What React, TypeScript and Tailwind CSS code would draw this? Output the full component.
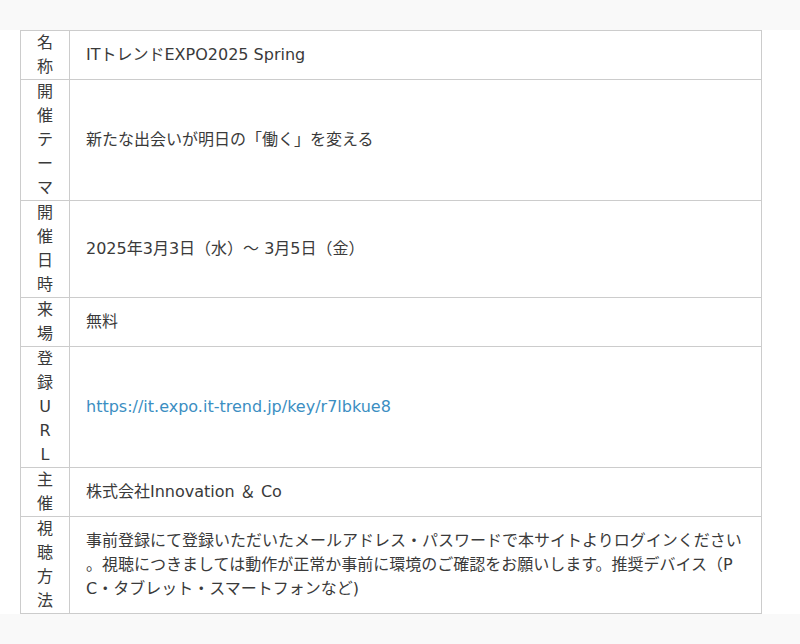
import React from 'react';

type Row = { label: string; value: React.ReactNode };

const rows: Row[] = [
  { label: '名称', value: 'ITトレンドEXPO2025 Spring' },
  { label: '開催テーマ', value: '新たな出会いが明日の「働く」を変える' },
  { label: '開催日時', value: '2025年3月3日（水）～ 3月5日（金）' },
  { label: '来場', value: '無料' },
  {
    label: '登録URL',
    value: (
      <a href="#" className="text-[#3b8ec2]">
        https://it.expo.it-trend.jp/key/r7lbkue8
      </a>
    ),
  },
  { label: '主催', value: '株式会社Innovation ＆ Co' },
  {
    label: '視聴方法',
    value:
      '事前登録にて登録いただいたメールアドレス・パスワードで本サイトよりログインください。視聴につきましては動作が正常か事前に環境のご確認をお願いします。推奨デバイス（PC・タブレット・スマートフォンなど)',
  },
];

export default function App() {
  return (
    <div
      className="min-h-screen bg-[#f9f9f9] pt-[30px] text-[16px] leading-[24px] text-[#3a3a3a]"
      style={{ fontFamily: '"DejaVu Sans", "Noto Sans CJK JP", sans-serif' }}
    >
      <div className="bg-white pl-[20px]">
        <table className="w-[742px] table-fixed border-collapse">
          <colgroup>
            <col className="w-[49px]" />
            <col />
          </colgroup>
          <tbody>
            {rows.map((r) => (
              <tr key={r.label}>
                <th className="border border-[#cccccc] px-[16px] py-0 text-center align-middle font-normal break-all">
                  {r.label}
                </th>
                <td className="border border-[#cccccc] pl-[16px] pr-[18px] py-[12px] align-middle break-all [line-break:anywhere]">
                  {r.value}
                </td>
              </tr>
            ))}
          </tbody>
        </table>
      </div>
    </div>
  );
}
